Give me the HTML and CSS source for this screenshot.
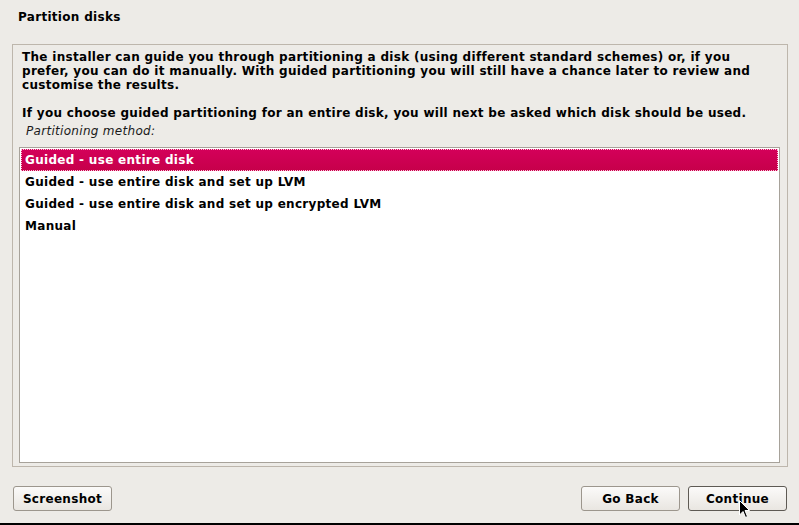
FILE: index.html
```html
<!DOCTYPE html>
<html>
<head>
<meta charset="utf-8">
<link rel="stylesheet" href="styles.css">
</head>
<body>
<div class="window">
  <div class="title">Partition disks</div>
  <div class="frame">
    <p class="intro">The installer can guide you through partitioning a disk (using different standard schemes) or, if you prefer, you can do it manually. With guided partitioning you will still have a chance later to review and customise the results.</p>
    <p class="intro second">If you choose guided partitioning for an entire disk, you will next be asked which disk should be used.</p>
    <div class="label">Partitioning method:</div>
    <div class="list">
      <div class="row selected">Guided - use entire disk</div>
      <div class="row">Guided - use entire disk and set up LVM</div>
      <div class="row">Guided - use entire disk and set up encrypted LVM</div>
      <div class="row">Manual</div>
    </div>
  </div>
  <div class="buttons">
    <button class="btn">Screenshot</button>
    <div class="spacer"></div>
    <button class="btn">Go Back</button>
    <button class="btn focus">Continue</button>
  </div>
  <div class="fill"></div>
  <div class="bottombar"></div>
  <svg class="cursor" width="12" height="19" viewBox="0 0 12 19">
    <path d="M0.5 0.5 L0.5 15 L4 11.5 L6.5 17.5 L8.5 16.5 L6 10.5 L10.5 10.5 Z" fill="#000" stroke="#fff" stroke-width="1"/>
  </svg>
</div>
</body>
</html>
```
FILE: styles.css
```css
html, body {
  margin: 0;
  padding: 0;
}
body {
  background: #edebe7;
  font-family: "DejaVu Sans", sans-serif;
  font-size: 12px;
  letter-spacing: 0.3px;
  color: #000;
}
.window {
  position: relative;
  width: 799px;
  height: 525px;
  display: flex;
  flex-direction: column;
  overflow: hidden;
}
.title {
  height: 44px;
  box-sizing: border-box;
  padding: 10px 0 0 18px;
  font-weight: bold;
  line-height: 14px;
}
.frame {
  margin-left: 12px;
  width: 776px;
  height: 423px;
  box-sizing: border-box;
  border: 1px solid #bdb6ac;
  padding: 5px 7px 3px 6px;
  display: flex;
  flex-direction: column;
}
.intro {
  margin: 0 12px 0 3px;
  font-weight: bold;
  line-height: 14px;
}
.intro.second {
  margin-top: 14px;
}
.label {
  font-style: italic;
  margin: 4px 0 0 7px;
  line-height: 14px;
  color: #1a1a1a;
}
.list {
  margin-top: 9px;
  flex: 1;
  background: #fff;
  border: 1px solid #a7a29a;
  padding: 1px;
}
.row {
  height: 22px;
  line-height: 22px;
  padding-left: 4px;
  font-weight: bold;
  box-sizing: border-box;
}
.row.selected {
  color: #fff;
  background: linear-gradient(#d4005a, #c6004a);
  outline: 1px dotted #ffc0d8;
  outline-offset: -1px;
}
.buttons {
  display: flex;
  margin-top: 19px;
  padding: 0 12px 0 13px;
  gap: 8px;
  height: 25px;
}
.spacer {
  flex: 1;
}
.btn {
  width: 99px;
  height: 25px;
  font-family: "DejaVu Sans", sans-serif;
  font-size: 12px;
  letter-spacing: 0.3px;
  font-weight: bold;
  color: #000;
  border: 1px solid #9c968d;
  border-radius: 3px;
  background: linear-gradient(#fbfaf9, #e9e6e1);
  padding: 0;
}
.btn.focus {
  border-color: #5e5a54;
}
.fill {
  flex: 1;
}
.bottombar {
  height: 2px;
  background: #000;
}
.cursor {
  position: absolute;
  left: 739px;
  top: 500px;
}
```
